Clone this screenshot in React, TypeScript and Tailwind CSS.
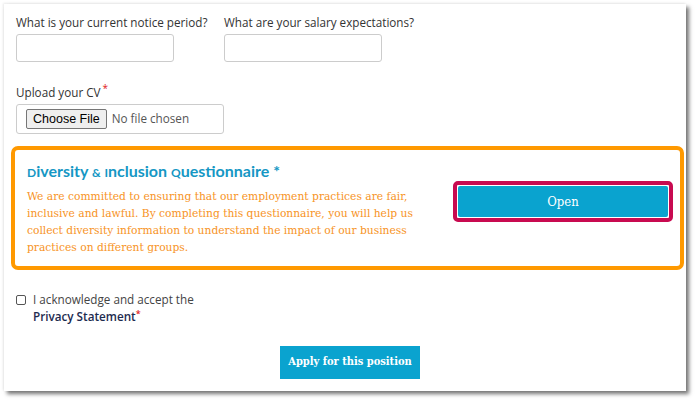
export default function App() {
  const slab = { fontFamily: '"DejaVu Serif Condensed", "DejaVu Serif", serif' };
  return (
    <div className="min-h-[401px] w-[696px] bg-white pl-[4px] pt-[4px]">
      <div
        className="relative h-[387px] w-[682px] bg-white shadow-[3px_3px_4px_rgba(0,0,0,0.55),-1px_-1px_2px_rgba(0,0,0,0.08)]"
        style={{ fontFamily: '"Open Sans", sans-serif' }}
      >
        <div className="px-[12px] pt-[8px]">
          <div className="grid grid-cols-[208px_208px]">
            <div className="flex flex-col">
              <label className="whitespace-nowrap text-[11.7px] leading-[20px] text-[#333]">What is your current notice period?</label>
              <input className="mt-[2px] h-[28px] w-[158px] rounded-[3px] border border-[#ccc]" />
            </div>
            <div className="flex flex-col">
              <label className="whitespace-nowrap text-[11.7px] leading-[20px] text-[#333]">What are your salary expectations?</label>
              <input className="mt-[2px] h-[28px] w-[158px] rounded-[3px] border border-[#ccc]" />
            </div>
          </div>

          <div className="mt-[20px] text-[11.7px] leading-[20px] text-[#333]">
            Upload your CV<sup className="ml-[2px] text-[10px] text-[#e02020]">*</sup>
          </div>
          <div className="mt-[2px] flex h-[30px] w-[208px] items-center rounded-[3px] border border-[#ccc] pl-[9px]">
            <span
              className="flex h-[20px] items-center rounded-[2px] border border-[#767676] bg-[#efefef] px-[6px] text-[12.5px] text-black"
              style={{ fontFamily: '"Liberation Sans", Arial, sans-serif' }}
            >
              Choose File
            </span>
            <span className="ml-[5px] text-[11.7px] text-[#555]">No file chosen</span>
          </div>
        </div>

        <div className="ml-[7px] mt-[12px] flex h-[124px] w-[673px] rounded-[7px] border-[4px] border-[#ff9900] pl-[12px] pr-[7px]">
          <div className="flex-1 pt-[11px]">
            <div className="whitespace-nowrap text-[16px] font-bold leading-[20px] text-[#1597c4]" style={{ fontFamily: 'Lato, "Open Sans", sans-serif' }}>
              <span className="text-[12px]">D</span>iversity <span className="text-[12px]">&amp;</span>{" "}
              <span className="text-[12px]">I</span>nclusion <span className="text-[12px]">Q</span>uestionnaire *
            </div>
            <p className="mt-[5px] whitespace-nowrap text-[11.9px] leading-[17px] text-[#f7931e]" style={slab}>
              We are committed to ensuring that our employment practices are fair,
              <br />
              inclusive and lawful. By completing this questionnaire, you will help us
              <br />
              collect diversity information to understand the impact of our business
              <br />
              practices on different groups.
            </p>
          </div>
          <div className="mt-[31px] h-[41px] w-[220px] rounded-[5px] border-[4px] border-[#c80a50] bg-white p-[1px]">
            <button
              className="flex h-full w-full items-center justify-center rounded-[2px] bg-[#0aa3cf] text-[13px] text-white"
              style={slab}
            >
              Open
            </button>
          </div>
        </div>

        <div className="mt-[21px] flex items-start pl-[12px]">
          <span className="mt-[4px] h-[10px] w-[10px] rounded-[2px] border border-[#555] bg-white" />
          <div className="ml-[7px] text-[11.7px] leading-[17px]">
            <div className="text-[#444]">I acknowledge and accept the</div>
            <div className="font-semibold text-[#1d2b4f]">
              Privacy Statement<sup className="text-[9px] text-[#e02020]">*</sup>
            </div>
          </div>
        </div>

        <div className="mt-[21px] flex justify-center pl-[10px]">
          <button
            className="h-[33px] w-[140px] whitespace-nowrap bg-[#0aa3cf] text-[11px] font-bold text-white"
            style={slab}
          >
            Apply for this position
          </button>
        </div>
      </div>
    </div>
  );
}
